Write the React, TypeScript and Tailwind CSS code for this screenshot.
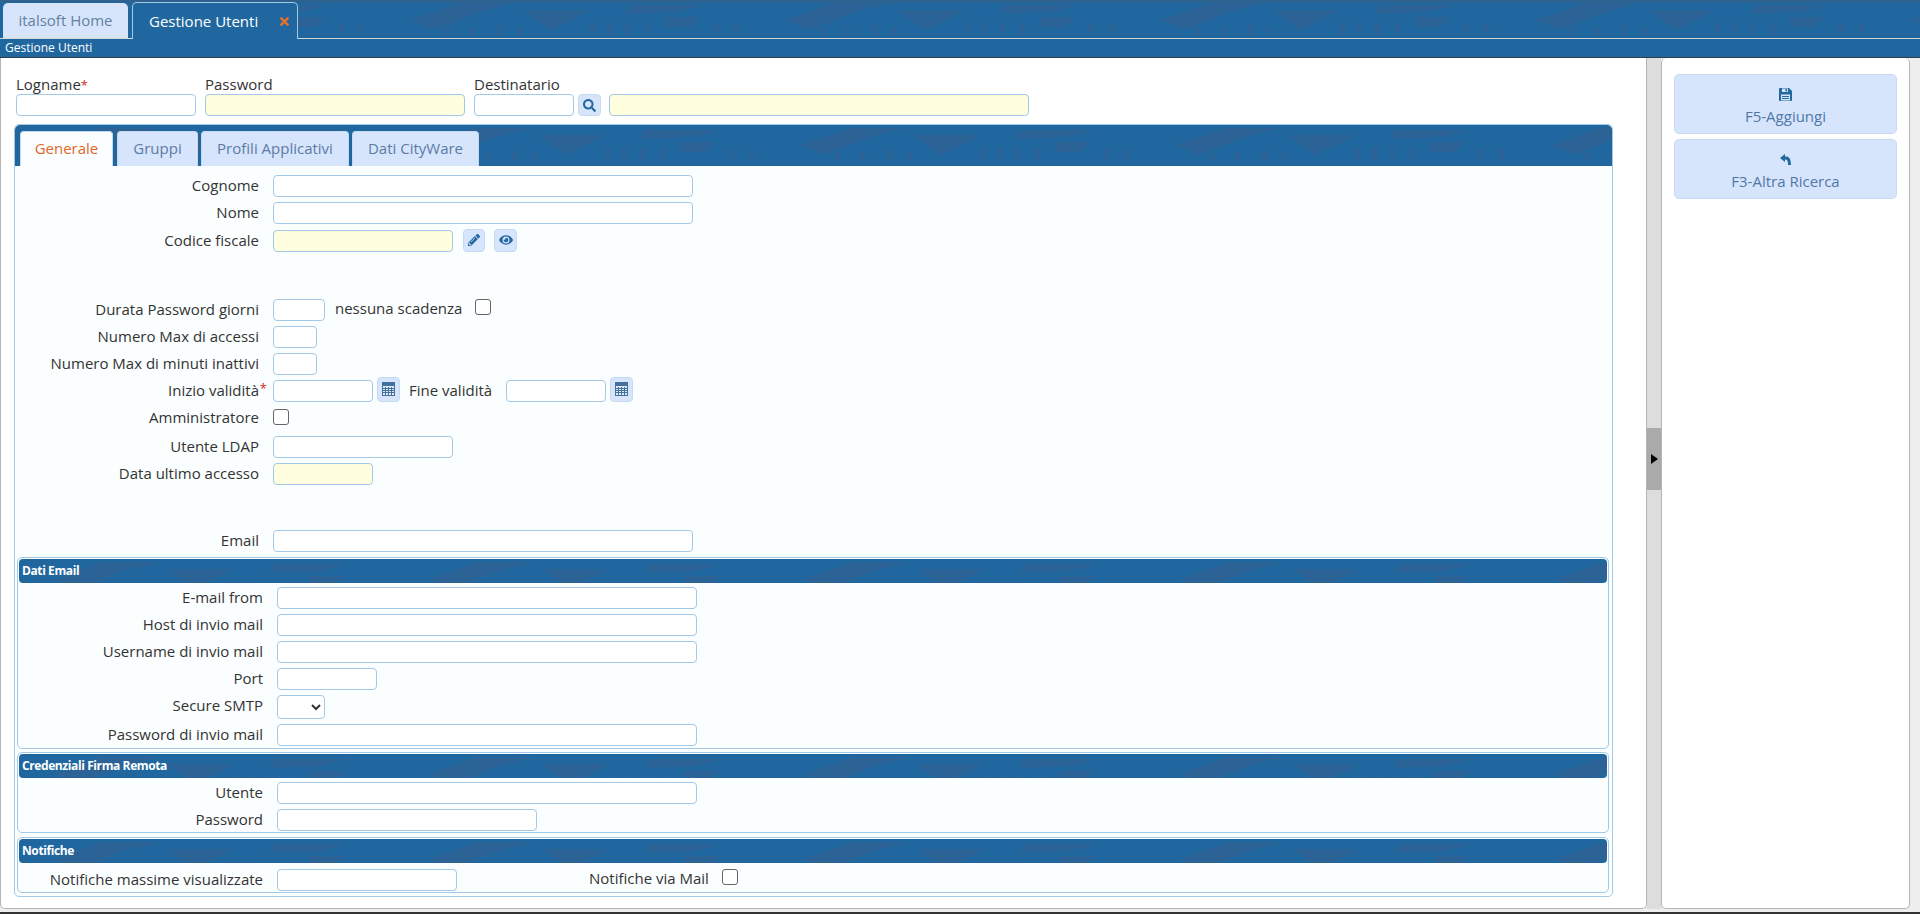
import type { ReactNode } from 'react'
import { FaEye, FaPencilAlt, FaSearch, FaTimes } from 'react-icons/fa'

// the faint skyline drawn behind every blue bar
function Texture({ id }: { id: string }) {
  return (
    <svg className="pointer-events-none absolute inset-0 h-full w-full" aria-hidden="true">
      <defs>
        <pattern id={id} x="0" y="0" width="375" height="38" patternUnits="userSpaceOnUse">
          <g fill="#35608f" opacity="0.5">
            <polygon points="35,20 85,3 140,3 105,12 60,30" />
            <polygon points="148,10 215,10 200,18 175,30" />
            <polygon points="255,5 330,5 300,12 250,14" />
            <polygon points="290,17 325,17 315,27 290,27" />
            <rect x="70" y="27" width="5" height="9" rx="2" />
            <rect x="95" y="27" width="5" height="9" rx="2" />
            <rect x="122" y="25" width="6" height="11" rx="2" />
            <rect x="142" y="27" width="5" height="9" rx="2" />
            <rect x="215" y="22" width="5" height="13" rx="2" />
            <rect x="232" y="22" width="5" height="13" rx="2" />
            <rect x="250" y="22" width="5" height="13" rx="2" />
            <rect x="270" y="22" width="5" height="13" rx="2" />
            <rect x="338" y="24" width="6" height="10" rx="3" />
            <rect x="358" y="24" width="6" height="10" rx="3" />
          </g>
        </pattern>
      </defs>
      <rect width="100%" height="100%" fill={`url(#${id})`} />
    </svg>
  )
}

function CalendarIcon() {
  return (
    <svg width="13" height="14" viewBox="0 0 13 14" aria-hidden="true">
      <rect x="0.5" y="0.5" width="12" height="13" fill="#dfe9f5" stroke="#44709c" />
      <rect x="1" y="1" width="11" height="3" fill="#44709c" />
      <path d="M1 6.5h11M1 8.5h11M1 10.5h11M3.5 5v8M6.5 5v8M9.5 5v8" stroke="#44709c" strokeWidth="1" fill="none" />
    </svg>
  )
}

function SaveIcon() {
  return (
    <svg width="13" height="13" viewBox="0 0 13 13" aria-hidden="true">
      <path d="M0 1a1 1 0 0 1 1-1h9l3 3v9a1 1 0 0 1-1 1H1a1 1 0 0 1-1-1z" fill="#23689f" />
      <rect x="3" y="0.5" width="6" height="3.5" fill="#d7e5fc" />
      <rect x="6.5" y="1" width="1.5" height="2.5" fill="#23689f" />
      <rect x="2" y="6.5" width="9" height="6" fill="#d7e5fc" />
      <path d="M3 8.5h7M3 10.5h7" stroke="#23689f" strokeWidth="1" />
    </svg>
  )
}

function BackIcon() {
  return (
    <svg width="11" height="11" viewBox="0 0 11 11" aria-hidden="true">
      <path d="M0 4L5 0V2.5H6C9 2.5 11 5 11 11H8C8 7 7.5 5.5 5 5.5V8Z" fill="#23689f" />
    </svg>
  )
}

function TextInput({ className, yellow }: { className: string, yellow?: boolean }) {
  return (
    <input
      type="text"
      className={`h-[22px] shrink-0 rounded-[4px] border border-[#a3c9e6] ${yellow ? 'bg-[#ffffdf]' : 'bg-white'} ${className}`}
    />
  )
}

function IconButton({ children, className }: { children: ReactNode, className: string }) {
  return (
    <button
      type="button"
      className={`flex shrink-0 items-center justify-center rounded-[4px] border border-[#c5daf2] bg-[#d7e5fc] text-[#23689f] ${className}`}
    >
      {children}
    </button>
  )
}

function Checkbox() {
  return <span className="block size-[16px] shrink-0 rounded-[3px] border border-[#666] bg-white" />
}

function Row({ label, required, labelWidth, className, children }: {
  label: string
  required?: boolean
  labelWidth: string
  className: string
  children?: ReactNode
}) {
  return (
    <div className={`flex items-start ${className}`}>
      <label className={`relative h-[22px] shrink-0 whitespace-nowrap pr-[14px] text-right leading-[21px] ${labelWidth}`}>
        {label}
        {required && <span className="absolute right-[6px] top-[-2px] text-[13px] text-[#d9262c]">*</span>}
      </label>
      {children}
    </div>
  )
}

function SectionBar({ id, title }: { id: string, title: string }) {
  return (
    <div className="relative flex h-[24px] items-center overflow-hidden rounded-[4px] bg-[#21679f] pl-[3px] text-[12px] font-bold tracking-[-0.4px] text-white">
      <Texture id={id} />
      <span className="relative">{title}</span>
    </div>
  )
}

function Fieldset({ className, children }: { className: string, children: ReactNode }) {
  return (
    <div className={`ml-[2px] mr-[3px] rounded-[5px] border border-[#a3c9e6] p-[1px] ${className}`}>
      {children}
    </div>
  )
}

function InnerTab({ label, active, className }: { label: string, active?: boolean, className: string }) {
  return (
    <div
      className={`relative flex h-[35px] items-center justify-center whitespace-nowrap rounded-t-[4px] border border-b-0 border-[#c5daf2] ${active ? 'bg-[#fbfefe] text-[#e2662b]' : 'bg-[#d7e5fc] text-[#5a7ba6]'} ${className}`}
    >
      {label}
    </div>
  )
}

export default function App() {
  const w1 = 'w-[258px]'
  const w2 = 'w-[258px]'
  return (
    <div className="flex h-[914px] w-[1920px] flex-col overflow-hidden bg-[#eeeeee] font-['Open_Sans',sans-serif] text-[15px] text-[#333333]">
      {/* top tabs */}
      <div className="relative flex h-[39px] shrink-0 items-end border-b border-[#d3d6d6] bg-[linear-gradient(#33608a,#21679f_4px)] pl-[3px]">
        <Texture id="top-tex" />
        <div className="relative flex h-[35px] w-[125px] items-center justify-center whitespace-nowrap rounded-t-[5px] bg-[#d7e5fc] text-[#64819f]">
          italsoft Home
        </div>
        <div className="relative mb-[-1px] ml-[4px] flex h-[37px] w-[166px] items-center whitespace-nowrap rounded-t-[5px] border border-b-0 border-[#a3c9e6] bg-[#21679f] pl-[16px] text-white">
          Gestione Utenti
          <FaTimes className="ml-[20px] text-[13px] text-[#e8702a]" />
        </div>
      </div>
      <div className="flex h-[19px] shrink-0 items-center border-b border-[#2c3e50] bg-[#21679f] pl-[5px] text-[12px] text-white">
        Gestione Utenti
      </div>

      <div className="flex min-h-0 flex-1">
        {/* main form */}
        <div className="h-[851px] w-[1647px] shrink-0 rounded-b-[5px] border-r border-b border-l border-[#b5b5b5] bg-white pl-[13px]">
          <div className="flex pl-[2px] pt-[17px]">
            <div className="w-[189px]">
              <div className="h-[19px] leading-[18px]">
                Logname
                <span className="text-[13px] text-[#d9262c]">*</span>
              </div>
              <TextInput className="w-[180px]" />
            </div>
            <div className="w-[269px]">
              <div className="h-[19px] leading-[18px]">Password</div>
              <TextInput className="w-[260px]" yellow />
            </div>
            <div>
              <div className="h-[19px] leading-[18px]">Destinatario</div>
              <div className="flex">
                <TextInput className="w-[100px]" />
                <IconButton className="ml-[4px] h-[22px] w-[23px]">
                  <FaSearch className="text-[13px]" />
                </IconButton>
                <TextInput className="ml-[8px] w-[420px]" yellow />
              </div>
            </div>
          </div>

          {/* tab panel */}
          <div className="mt-[7px] h-[773px] w-[1599px] rounded-[5px] border border-[#a3c9e6] bg-[#fbfefe]">
            <div className="relative flex h-[41px] items-end overflow-hidden rounded-t-[5px] bg-[#21679f] pl-[5px]">
              <Texture id="tabs-tex" />
              <InnerTab label="Generale" active className="w-[93px]" />
              <InnerTab label="Gruppi" className="ml-[4px] w-[81px]" />
              <InnerTab label="Profili Applicativi" className="ml-[3px] w-[148px]" />
              <InnerTab label="Dati CityWare" className="ml-[3px] w-[127px]" />
            </div>

            <Row label="Cognome" labelWidth={w1} className="mt-[9px]">
              <TextInput className="w-[420px]" />
            </Row>
            <Row label="Nome" labelWidth={w1} className="mt-[5px]">
              <TextInput className="w-[420px]" />
            </Row>
            <Row label="Codice fiscale" labelWidth={w1} className="mt-[6px]">
              <TextInput className="w-[180px]" yellow />
              <IconButton className="ml-[10px] mt-[-1px] h-[23px] w-[22px]">
                <FaPencilAlt className="text-[12px]" />
              </IconButton>
              <IconButton className="ml-[9px] mt-[-1px] h-[23px] w-[23px]">
                <FaEye className="text-[14px]" />
              </IconButton>
            </Row>

            <Row label="Durata Password giorni" labelWidth={w1} className="mt-[47px]">
              <TextInput className="w-[52px]" />
              <span className="ml-[10px] h-[22px] w-[140px] whitespace-nowrap leading-[18px]">nessuna scadenza</span>
              <Checkbox />
            </Row>
            <Row label="Numero Max di accessi" labelWidth={w1} className="mt-[5px]">
              <TextInput className="w-[44px]" />
            </Row>
            <Row label="Numero Max di minuti inattivi" labelWidth={w1} className="mt-[5px]">
              <TextInput className="w-[44px]" />
            </Row>
            <Row label="Inizio validità" required labelWidth={w1} className="mt-[5px]">
              <TextInput className="w-[100px]" />
              <IconButton className="ml-[4px] mt-[-3px] h-[25px] w-[23px]">
                <CalendarIcon />
              </IconButton>
              <span className="ml-[9px] w-[97px] whitespace-nowrap leading-[21px]">Fine validità</span>
              <TextInput className="w-[100px]" />
              <IconButton className="ml-[4px] mt-[-3px] h-[25px] w-[23px]">
                <CalendarIcon />
              </IconButton>
            </Row>
            <Row label="Amministratore" labelWidth="w-[258px] mt-[-2px]" className="mt-[7px] h-[16px]">
              <Checkbox />
            </Row>
            <Row label="Utente LDAP" labelWidth={w1} className="mt-[11px]">
              <TextInput className="w-[180px]" />
            </Row>
            <Row label="Data ultimo accesso" labelWidth={w1} className="mt-[5px]">
              <TextInput className="w-[100px]" yellow />
            </Row>
            <Row label="Email" labelWidth={w1} className="mt-[45px]">
              <TextInput className="w-[420px]" />
            </Row>

            <Fieldset className="mt-[5px] h-[192px]">
              <SectionBar id="mail-tex" title="Dati Email" />
              <Row label="E-mail from" labelWidth={w2} className="mt-[4px]">
                <TextInput className="w-[420px]" />
              </Row>
              <Row label="Host di invio mail" labelWidth={w2} className="mt-[5px]">
                <TextInput className="w-[420px]" />
              </Row>
              <Row label="Username di invio mail" labelWidth={w2} className="mt-[5px]">
                <TextInput className="w-[420px]" />
              </Row>
              <Row label="Port" labelWidth={w2} className="mt-[5px]">
                <TextInput className="w-[100px]" />
              </Row>
              <Row label="Secure SMTP" labelWidth={w2} className="mt-[5px]">
                <select className="h-[24px] w-[48px] shrink-0 appearance-auto rounded-[4px] border border-[#a3c9e6] bg-white" />
              </Row>
              <Row label="Password di invio mail" labelWidth={w2} className="mt-[5px]">
                <TextInput className="w-[420px]" />
              </Row>
            </Fieldset>

            <Fieldset className="mt-[3px] h-[81px]">
              <SectionBar id="firma-tex" title="Credenziali Firma Remota" />
              <Row label="Utente" labelWidth={w2} className="mt-[4px]">
                <TextInput className="w-[420px]" />
              </Row>
              <Row label="Password" labelWidth={w2} className="mt-[5px]">
                <TextInput className="w-[260px]" />
              </Row>
            </Fieldset>

            <Fieldset className="mt-[4px] h-[56px]">
              <SectionBar id="notif-tex" title="Notifiche" />
              <Row label="Notifiche massime visualizzate" labelWidth={w2} className="mt-[6px]">
                <TextInput className="w-[180px]" />
                <span className="ml-[132px] h-[22px] w-[133px] whitespace-nowrap leading-[18px]">Notifiche via Mail</span>
                <Checkbox />
              </Row>
            </Fieldset>
          </div>
        </div>

        {/* splitter */}
        <div className="h-[851px] w-[14px] shrink-0 bg-[#dddddd] pt-[370px]">
          <div className="flex h-[62px] items-center justify-center bg-[#aaaaaa]">
            <span className="h-0 w-0 border-y-[5px] border-l-[7px] border-y-transparent border-l-black" />
          </div>
        </div>

        {/* actions */}
        <div className="h-[851px] w-[249px] shrink-0 rounded-[5px] border-r border-b border-l border-[#b5b5b5] bg-white pl-[12px] pt-[16px]">
          {[
            { label: 'F5-Aggiungi', icon: <SaveIcon /> },
            { label: 'F3-Altra Ricerca', icon: <BackIcon /> },
          ].map(b => (
            <button
              key={b.label}
              type="button"
              className="mb-[5px] flex h-[60px] w-[223px] flex-col items-center rounded-[5px] border border-[#c5daf2] bg-[#d7e5fc] pt-[12px] text-[#4f78a8]"
            >
              <span className="flex h-[14px] items-center">{b.icon}</span>
              <span className="mt-[5px] leading-[20px]">{b.label}</span>
            </button>
          ))}
        </div>
      </div>
      <div className="h-[2px] shrink-0 bg-[#333333]" />
    </div>
  )
}
